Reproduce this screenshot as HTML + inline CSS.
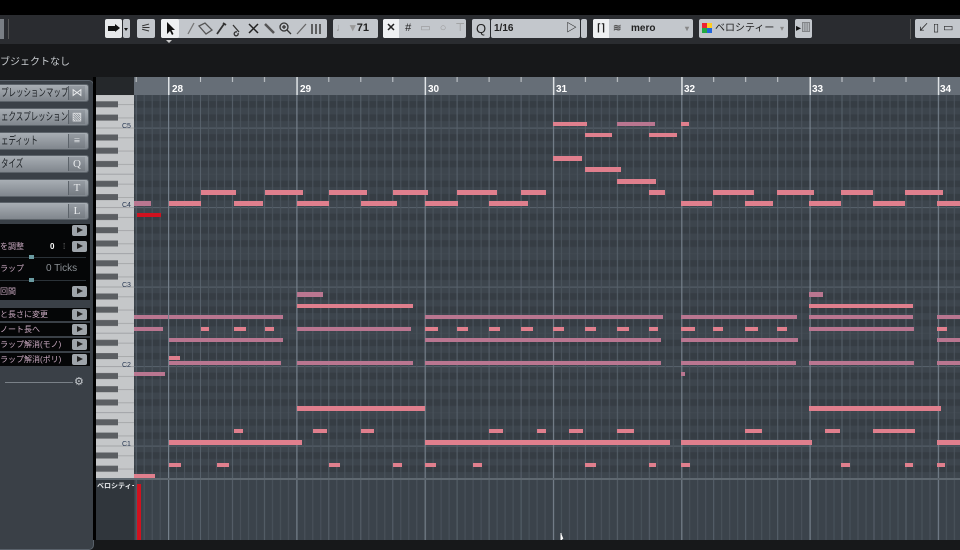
<!DOCTYPE html>
<html><head><meta charset="utf-8">
<style>
*{margin:0;padding:0;box-sizing:border-box}
body{width:960px;height:540px;overflow:hidden;background:#17181a;font-family:"Liberation Sans","Noto Sans CJK JP",sans-serif;position:relative}
.abs{position:absolute}
.tb{background:#c3c7cc;border-radius:2px;white-space:nowrap;overflow:hidden}
.btn{position:absolute;left:-6px;width:95px;height:18px;border-radius:3px;background:linear-gradient(#a8aeb4,#80868d);border:1px solid #5c636a;color:#1c2024;font-size:11px;line-height:16px;white-space:nowrap;overflow:hidden;padding-left:6px}
.btn i{font-style:normal;display:inline-block;transform:scaleX(0.68);transform-origin:left center}
.btn span{position:absolute;right:3px;top:1px;width:17px;height:14px;background:linear-gradient(#959ba2,#767c83);border-left:1px solid #5c636a;color:#e8eaec;font-size:11px;text-align:center;line-height:14px;font-family:"Liberation Serif",serif}
.row{position:absolute;left:0;width:90px;height:13px;background:#050607;color:#c9a9c0;font-size:8px;line-height:13px;white-space:nowrap}
.pb{position:absolute;right:3px;top:1px;width:15px;height:11px;background:#9ea4aa;border-radius:2px}
.pb:after{content:"";position:absolute;left:5px;top:2px;border-left:6px solid #222;border-top:3.5px solid transparent;border-bottom:3.5px solid transparent}
</style></head><body>
<div class="abs" style="left:0;top:0;width:960px;height:15px;background:#000"></div>
<div class="abs" style="left:0;top:15px;width:960px;height:29px;background:#2a2c30"></div>
<div class="abs" style="left:0;top:19px;width:4px;height:20px;background:#7a7f85"></div>
<div class="abs" style="left:8px;top:19px;width:1px;height:20px;background:#555"></div>
<div class="abs tb" style="left:105px;top:19px;width:17px;height:19px;background:#e6e8ea"><div class="abs" style="left:3px;top:7px;width:7px;height:5px;background:#111"></div><div class="abs" style="left:10px;top:5px;border-left:5px solid #111;border-top:4px solid transparent;border-bottom:4px solid transparent"></div></div>
<div class="abs tb" style="left:123px;top:19px;width:7px;height:19px"><div class="abs" style="left:1px;top:9px;border-top:3px solid #111;border-left:2.5px solid transparent;border-right:2.5px solid transparent"></div></div>
<div class="abs tb" style="left:137px;top:19px;width:18px;height:19px;color:#333;font-size:12px;text-align:center;line-height:19px">⚟</div>
<div class="abs tb" style="left:161px;top:19px;width:166px;height:19px"></div>
<div class="abs" style="left:161px;top:19px;width:18px;height:19px;background:#eef0f2;border-radius:2px"></div>
<svg class="abs" style="left:161px;top:19px" width="166" height="19" stroke="#222" fill="none" stroke-width="1.3">
<path d="M6 3 L6 15 L9 12 L11 16 L12.5 15 L10.5 11 L14 11 Z" fill="#111" stroke="none"/>
<path d="M27 15 L33 4" stroke="#777"/>
<path d="M38 7 L44 4 L51 11 L45 15 Z" stroke="#555"/>
<path d="M56 15 L63 5 M62 4 L65 6" stroke="#333" stroke-width="1.8"/>
<path d="M72 6 L78 13 M76 13 a2 2 0 1 0 1 1" stroke="#333"/>
<path d="M88 5 L97 14 M97 5 L88 14" stroke="#222" stroke-width="1.5"/>
<path d="M104 5 L113 14" stroke="#555" stroke-width="2.5"/>
<circle cx="123" cy="8" r="4" stroke="#333"/><path d="M126 11 L130 15 M121 8h4M123 6v4" stroke="#333"/>
<path d="M136 15 L145 5" stroke="#666"/>
<path d="M151 5v10M155 5v10M159 5v10" stroke="#444" stroke-width="1.6"/>
</svg>
<div class="abs" style="left:166px;top:40px;border-top:3px solid #ccc;border-left:3px solid transparent;border-right:3px solid transparent"></div>
<div class="abs tb" style="left:333px;top:19px;width:45px;height:19px;font-size:11px;font-weight:bold;color:#222;line-height:19px;text-align:right;padding-right:9px"><span style="position:absolute;left:3px;color:#999">♩ ▾</span>71</div>
<div class="abs tb" style="left:383px;top:19px;width:83px;height:19px;font-size:11px;color:#999;line-height:19px;letter-spacing:3px"><span style="display:inline-block;width:16px;height:19px;background:#eef0f2;color:#222;letter-spacing:0;text-align:center;font-weight:bold">✕</span> <span style="color:#222">#</span> ▭ ○ ⊤▾</div>
<div class="abs tb" style="left:472px;top:19px;width:18px;height:19px;font-size:13px;color:#222;line-height:19px;text-align:center">Q</div>
<div class="abs tb" style="left:491px;top:19px;width:89px;height:19px;font-size:10px;font-weight:bold;color:#222;line-height:19px;padding-left:3px">1/16<span style="position:absolute;right:3px;top:0;font-size:11px">▷</span></div>
<div class="abs tb" style="left:581px;top:19px;width:6px;height:19px"></div>
<div class="abs tb" style="left:593px;top:19px;width:100px;height:19px;font-size:10px;font-weight:bold;color:#222;line-height:19px"><span style="display:inline-block;width:16px;height:19px;background:#eef0f2;text-align:center">⌈⌉</span><span style="padding-left:4px;color:#555">≋</span><span style="position:absolute;left:38px">mero</span><span style="position:absolute;right:4px;color:#888;font-size:8px">▾</span></div>
<div class="abs tb" style="left:699px;top:19px;width:89px;height:19px;font-size:10px;color:#222;line-height:19px;padding-left:16px">ベロシティー<span style="position:absolute;right:4px;color:#888;font-size:8px">▾</span>
<div class="abs" style="left:3px;top:4px;width:5px;height:5px;background:#e23"></div><div class="abs" style="left:8px;top:4px;width:5px;height:5px;background:#fc2"></div><div class="abs" style="left:3px;top:9px;width:5px;height:5px;background:#2a4"></div><div class="abs" style="left:8px;top:9px;width:5px;height:5px;background:#26d"></div></div>
<div class="abs tb" style="left:795px;top:19px;width:17px;height:19px;font-size:10px;color:#111;line-height:19px;text-align:center">▸▥</div>
<div class="abs" style="left:910px;top:19px;width:1px;height:20px;background:#555"></div>
<div class="abs tb" style="left:915px;top:19px;width:50px;height:19px;font-size:11px;color:#222;line-height:19px;padding-left:3px;letter-spacing:4px">↙▯▭</div>
<div class="abs" style="left:0;top:53px;color:#c8ccd0;font-size:10px">ブジェクトなし</div>
<div class="abs" style="left:-6px;top:80px;width:100px;height:470px;background:#3a4047;border:1px solid #59616a;border-radius:5px"></div>
<div class="btn" style="top:84px"><i>プレッションマップ</i><span>⋈</span></div>
<div class="btn" style="top:108px"><i>ェクスプレッション</i><span>▧</span></div>
<div class="btn" style="top:132px"><i>ェディット</i><span>≡</span></div>
<div class="btn" style="top:155px"><i>タイズ</i><span>Q</span></div>
<div class="btn" style="top:179px"><span>T</span></div>
<div class="btn" style="top:202px"><span>L</span></div>
<div class="abs" style="left:0;top:224px;width:90px;height:76px;background:#050607"></div>
<div class="row" style="top:224px"><div class="pb"></div></div>
<div class="row" style="top:240px">を調整<b style="position:absolute;left:50px;color:#fff">0</b><span style="position:absolute;left:63px;color:#888">⁞</span><div class="pb"></div></div>
<div class="abs" style="left:0;top:257px;width:86px;height:1px;background:#2b3238"></div><div class="abs" style="left:29px;top:255px;width:5px;height:4px;background:#6a9aa0"></div>
<div class="row" style="top:262px;background:none">ラップ<span style="position:absolute;left:46px;color:#8a8f94;font-size:10px">0 Ticks</span></div>
<div class="abs" style="left:0;top:280px;width:86px;height:1px;background:#2b3238"></div><div class="abs" style="left:29px;top:278px;width:5px;height:4px;background:#6a9aa0"></div>
<div class="row" style="top:285px">回間<div class="pb" style="background:#9ea4aa"></div></div>
<div class="row" style="top:308px">と長さに変更<div class="pb"></div></div>
<div class="row" style="top:323px">ノート長へ<div class="pb"></div></div>
<div class="row" style="top:338px">ラップ解消(モノ)<div class="pb"></div></div>
<div class="row" style="top:353px">ラップ解消(ポリ)<div class="pb"></div></div>
<div class="abs" style="left:5px;top:382px;width:68px;height:1px;background:#7a8188"></div>
<div class="abs" style="left:74px;top:375px;color:#c8ccd0;font-size:11px">⚙</div>
<div class="abs" style="left:93px;top:77px;width:3px;height:463px;background:#000"></div>
<div class="abs" style="left:96px;top:77px;width:38px;height:18px;background:#25282b"></div>
<svg class="abs" style="left:0;top:0" width="960" height="540">
<defs>
<pattern id="hg" patternUnits="userSpaceOnUse" x="0" y="48.1" width="960" height="79.5">
<rect width="960" height="79.5" fill="#3d454d"/>
<g fill="#363d44"><rect y="6.625" width="960" height="6.625"/><rect y="19.875" width="960" height="6.625"/><rect y="33.125" width="960" height="6.625"/><rect y="53" width="960" height="6.625"/><rect y="66.25" width="960" height="6.625"/></g>
<rect y="0" width="960" height="1" fill="#59636d"/>
<rect y="46.375" width="960" height="0.6" fill="#434b53"/>
</pattern>
<pattern id="vg" patternUnits="userSpaceOnUse" x="168" y="0" width="128.3" height="540">
<g fill="#4a535c"><rect x="8" width="1" height="540"/><rect x="16" width="1" height="540"/><rect x="24" width="1" height="540"/><rect x="40" width="1" height="540"/><rect x="48" width="1" height="540"/><rect x="56" width="1" height="540"/><rect x="72" width="1" height="540"/><rect x="80" width="1" height="540"/><rect x="88" width="1" height="540"/><rect x="104" width="1" height="540"/><rect x="112" width="1" height="540"/><rect x="120" width="1" height="540"/></g>
<g fill="#58626c"><rect x="32" width="1" height="540"/><rect x="64" width="1" height="540"/><rect x="96" width="1" height="540"/></g>
<rect x="0" width="1.2" height="540" fill="#75808b"/>
</pattern>
<pattern id="rt" patternUnits="userSpaceOnUse" x="168" y="0" width="128.3" height="540">
<rect x="0" y="77" width="1.5" height="18" fill="#dfe3e6"/>
<g fill="#c8ccd0"><rect x="32" y="77" width="1" height="5"/><rect x="64" y="77" width="1" height="5"/><rect x="96" y="77" width="1" height="5"/></g>
</pattern>
<pattern id="bk" patternUnits="userSpaceOnUse" x="0" y="48.1" width="960" height="79.5">
<g fill="#5b5e62"><rect x="96" y="6.9" width="22" height="6"/><rect x="96" y="20.1" width="22" height="6"/><rect x="96" y="33.4" width="22" height="6"/><rect x="96" y="53.2" width="22" height="6"/><rect x="96" y="66.5" width="22" height="6"/></g>
<g fill="#9a9c9e"><rect x="96" y="0" width="38" height="0.8"/><rect x="96" y="46.2" width="38" height="0.8"/><rect x="118" y="9.9" width="16" height="0.7"/><rect x="118" y="23.1" width="16" height="0.7"/><rect x="118" y="36.4" width="16" height="0.7"/><rect x="118" y="56.2" width="16" height="0.7"/><rect x="118" y="69.5" width="16" height="0.7"/></g>
</pattern>
</defs>
<rect x="134" y="77" width="826" height="18" fill="#666e77"/>
<rect x="134" y="77" width="826" height="18" fill="url(#rt)"/>
<g fill="#fff" font-size="10" font-weight="bold" font-family="Liberation Sans">
<text x="172" y="92">28</text><text x="300" y="92">29</text><text x="428" y="92">30</text><text x="556" y="92">31</text><text x="684" y="92">32</text><text x="812" y="92">33</text><text x="940" y="92">34</text></g>
<rect x="96" y="95" width="38" height="383" fill="#c5c7c9"/>
<rect x="96" y="95" width="38" height="383" fill="url(#bk)"/>
<g fill="#2a3a55" font-size="7" font-family="Liberation Sans"><text x="122" y="128">C5</text><text x="122" y="207">C4</text><text x="122" y="287">C3</text><text x="122" y="367">C2</text><text x="122" y="446">C1</text></g>
<rect x="134" y="95" width="826" height="383" fill="url(#hg)"/>
<rect x="134" y="95" width="826" height="383" fill="url(#vg)"/>
<rect x="96" y="478" width="864" height="2" fill="#5f6870"/>
<rect x="96" y="480" width="38" height="60" fill="#30363c"/>
<text x="97" y="488" fill="#e8eaec" font-size="7" font-weight="bold" font-family="Liberation Sans,Noto Sans CJK JP">ベロシティー</text>
<rect x="134" y="480" width="826" height="60" fill="#3b434b"/>
<rect x="134" y="480" width="826" height="60" fill="url(#vg)"/>
<rect x="137" y="484" width="4" height="56" fill="#d0121f"/>
<g fill="#e07f8d">
<rect x="201" y="190" width="35" height="5"/><rect x="265" y="190" width="38" height="5"/><rect x="329" y="190" width="38" height="5"/><rect x="393" y="190" width="35" height="5"/><rect x="457" y="190" width="40" height="5"/><rect x="521" y="190" width="25" height="5"/><rect x="649" y="190" width="16" height="5"/><rect x="713" y="190" width="41" height="5"/><rect x="777" y="190" width="37" height="5"/><rect x="841" y="190" width="32" height="5"/><rect x="905" y="190" width="38" height="5"/>
<rect x="169" y="201" width="32" height="5"/><rect x="234" y="201" width="29" height="5"/><rect x="297" y="201" width="32" height="5"/><rect x="361" y="201" width="36" height="5"/><rect x="425" y="201" width="33" height="5"/><rect x="489" y="201" width="39" height="5"/><rect x="681" y="201" width="31" height="5"/><rect x="745" y="201" width="28" height="5"/><rect x="809" y="201" width="32" height="5"/><rect x="873" y="201" width="32" height="5"/><rect x="937" y="201" width="23" height="5"/>
<rect x="553" y="122" width="34" height="4"/><rect x="681" y="122" width="8" height="4"/>
<rect x="585" y="133" width="27" height="4"/><rect x="649" y="133" width="28" height="4"/>
<rect x="553" y="156" width="29" height="5"/><rect x="585" y="167" width="36" height="5"/><rect x="617" y="179" width="39" height="5"/>
<rect x="297" y="304" width="116" height="4"/><rect x="809" y="304" width="104" height="4"/>
<rect x="201" y="327" width="8" height="4"/><rect x="234" y="327" width="12" height="4"/><rect x="265" y="327" width="9" height="4"/><rect x="425" y="327" width="13" height="4"/><rect x="457" y="327" width="11" height="4"/><rect x="489" y="327" width="11" height="4"/><rect x="521" y="327" width="12" height="4"/><rect x="553" y="327" width="11" height="4"/><rect x="585" y="327" width="11" height="4"/><rect x="617" y="327" width="12" height="4"/><rect x="649" y="327" width="9" height="4"/><rect x="681" y="327" width="14" height="4"/><rect x="713" y="327" width="10" height="4"/><rect x="745" y="327" width="13" height="4"/><rect x="777" y="327" width="10" height="4"/><rect x="937" y="327" width="10" height="4"/>
<rect x="169" y="356" width="11" height="4"/>
<rect x="297" y="406" width="128" height="5"/><rect x="809" y="406" width="132" height="5"/>
<rect x="234" y="429" width="9" height="4"/><rect x="313" y="429" width="14" height="4"/><rect x="361" y="429" width="13" height="4"/><rect x="489" y="429" width="14" height="4"/><rect x="537" y="429" width="9" height="4"/><rect x="569" y="429" width="14" height="4"/><rect x="617" y="429" width="17" height="4"/><rect x="745" y="429" width="17" height="4"/><rect x="825" y="429" width="15" height="4"/><rect x="873" y="429" width="42" height="4"/>
<rect x="169" y="440" width="133" height="5"/><rect x="425" y="440" width="245" height="5"/><rect x="681" y="440" width="131" height="5"/><rect x="937" y="440" width="23" height="5"/>
<rect x="169" y="463" width="12" height="4"/><rect x="217" y="463" width="12" height="4"/><rect x="329" y="463" width="11" height="4"/><rect x="393" y="463" width="9" height="4"/><rect x="425" y="463" width="11" height="4"/><rect x="473" y="463" width="9" height="4"/><rect x="585" y="463" width="11" height="4"/><rect x="649" y="463" width="7" height="4"/><rect x="681" y="463" width="9" height="4"/><rect x="841" y="463" width="9" height="4"/><rect x="905" y="463" width="8" height="4"/><rect x="937" y="463" width="8" height="4"/>
<rect x="134" y="474" width="21" height="4"/>
</g>
<g fill="#b97690">
<rect x="134" y="201" width="17" height="5"/>
<rect x="617" y="122" width="38" height="4"/>
<rect x="297" y="292" width="26" height="5"/><rect x="809" y="292" width="14" height="5"/>
<rect x="134" y="315" width="34" height="4"/><rect x="169" y="315" width="114" height="4"/><rect x="425" y="315" width="238" height="4"/><rect x="681" y="315" width="116" height="4"/><rect x="809" y="315" width="104" height="4"/><rect x="937" y="315" width="23" height="4"/>
<rect x="134" y="327" width="29" height="4"/><rect x="297" y="327" width="114" height="4"/><rect x="809" y="327" width="105" height="4"/>
<rect x="169" y="338" width="114" height="4"/><rect x="425" y="338" width="236" height="4"/><rect x="681" y="338" width="117" height="4"/><rect x="937" y="338" width="23" height="4"/>
<rect x="169" y="361" width="112" height="4"/><rect x="297" y="361" width="116" height="4"/><rect x="425" y="361" width="236" height="4"/><rect x="681" y="361" width="115" height="4"/><rect x="809" y="361" width="105" height="4"/><rect x="937" y="361" width="23" height="4"/>
<rect x="134" y="372" width="31" height="4"/><rect x="681" y="372" width="4" height="4"/>
</g>
<rect x="137" y="213" width="24" height="4" fill="#d0121f"/>
<path d="M561 533 L561 540 L563 538" stroke="#fff" stroke-width="1" fill="#fff"/>
</svg>
</body></html>
